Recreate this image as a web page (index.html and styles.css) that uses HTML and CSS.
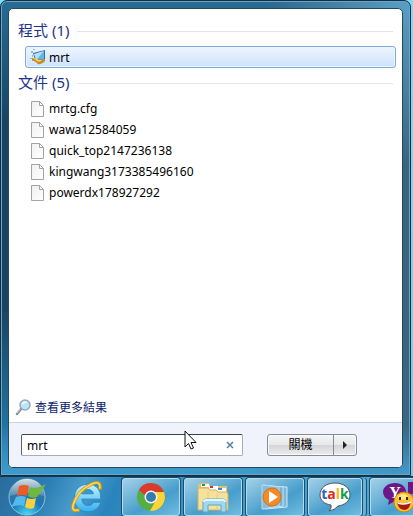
FILE: index.html
```html
<!DOCTYPE html>
<html lang="zh-Hant">
<head>
    <meta charset="UTF-8">
    <meta name="viewport" content="width=device-width, initial-scale=1.0">
    <title>mrt</title>
    <link rel="stylesheet" href="styles.css">
</head>
<body>
    <!-- Shared file icon -->
    <svg class="defs" width="0" height="0" aria-hidden="true">
        <defs>
            <linearGradient id="paper" x1="0" y1="0" x2="1" y2="1">
                <stop offset="0" stop-color="#f0f0f0"/>
                <stop offset="1" stop-color="#ffffff"/>
            </linearGradient>
        </defs>
        <symbol id="file" viewBox="0 0 16 16">
            <path d="M1.500 .5h8l4 4v11h-12z" fill="url(#paper)" stroke="#a3a3a3"/>
            <path d="M9.500 .5v4h4z" fill="#fff" stroke="#a3a3a3"/>
        </symbol>
    </svg>

    <main class="start-menu">
        <div class="panel">
            <section class="results">
                <h2>程式 (1)</h2>
                <ul class="programs">
                    <li><a href="#mrt">
                        <svg class="icon" viewBox="0 0 16 16">
                            <path d="M1 2h2v2H1zM2 6h1v2H2zM0 9h2v1H0zM3 0h2v1H3zM2 11h2v1H2z" fill="#8fb9d8"/>
                            <path d="M3 4l12-3v11l-10-1z" fill="#3b6fa3"/>
                            <path d="M4 5l10-3v9l-8-1z" fill="#63b5ea"/>
                            <path d="M4 5l10-3-7 8h-1z" fill="#b5dff8"/>
                            <path d="M2 9q4 0 6 2l7-1v2q-3 4-7 3-3-3-6-4z" fill="#c98a22"/>
                            <path d="M3 9q4 0 6 2l3 0q-2 3-5 1z" fill="#f7d264"/>
                        </svg>
                        mrt</a></li>
                </ul>
                <h2>文件 (5)</h2>
                <ul class="files">
                    <li><a href="#f1"><svg class="icon"><use href="#file"/></svg>mrtg.cfg</a></li>
                    <li><a href="#f2"><svg class="icon"><use href="#file"/></svg>wawa12584059</a></li>
                    <li><a href="#f3"><svg class="icon"><use href="#file"/></svg>quick_top2147236138</a></li>
                    <li><a href="#f4"><svg class="icon"><use href="#file"/></svg>kingwang3173385496160</a></li>
                    <li><a href="#f5"><svg class="icon"><use href="#file"/></svg>powerdx178927292</a></li>
                </ul>
                <a class="more" href="#more">
                    <svg class="icon" viewBox="0 0 16 16">
                        <path d="M2 15l4-5" stroke="#8a8f96" stroke-width="2.500" stroke-linecap="round"/>
                        <path d="M2 14l3-4" stroke="#d9dde2" stroke-width="1"/>
                        <circle cx="10" cy="6" r="5" fill="#b9e4fa" stroke="#9aa9b8" stroke-width="1.500"/>
                        <path d="M6.500 6a3.500 3.500 0 0 1 6-2.500q-3 0-6 2.500z" fill="#f4fcff"/>
                    </svg>
                    查看更多結果</a>
            </section>

            <form class="search-bar">
                <div class="search-box">
                    <input type="text" value="mrt" aria-label="搜尋">
                    <button type="reset" class="clear" aria-label="清除">
                        <svg width="8" height="8" viewBox="0 0 8 8"><path d="M1 1l6 6M7 1l-6 6" stroke="#4e82ab" stroke-width="1.500"/></svg>
                    </button>
                </div>
                <div class="power">
                    <button type="button" class="shutdown">關機</button>
                    <button type="button" class="power-more" aria-label="更多選項">
                        <svg width="4" height="8" viewBox="0 0 4 8"><path d="M0 0l4 4-4 4z" fill="#222"/></svg>
                    </button>
                </div>
                <svg class="cursor" width="13" height="20" viewBox="0 0 13 20">
                    <path d="M1 1v16l3.500-3.500 2.500 5.500 2.500-1-2.500-5.500h5z" fill="#fff" stroke="#111"/>
                </svg>
            </form>
        </div>
    </main>

    <nav class="taskbar">
        <button class="orb" aria-label="開始">
            <svg width="38" height="38" viewBox="0 0 38 38">
                <defs>
                    <radialGradient id="orb" cx=".5" cy="1" r="1">
                        <stop offset="0" stop-color="#46dcf7"/>
                        <stop offset=".45" stop-color="#1b78b5"/>
                        <stop offset="1" stop-color="#4f7591"/>
                    </radialGradient>
                    <linearGradient id="gloss" x1="0" y1="0" x2="0" y2="1">
                        <stop offset="0" stop-color="#fff" stop-opacity=".75"/>
                        <stop offset="1" stop-color="#fff" stop-opacity=".15"/>
                    </linearGradient>
                </defs>
                <circle cx="19" cy="19" r="18" fill="url(#orb)" stroke="#8fc3df"/>
                <path d="M2 18a17 17 0 0 1 34 0q-17-6-34 0z" fill="url(#gloss)"/>
                <path d="M11 8q5-2 10 0l-2 10q-5-2-10 0z" fill="#ed5b25"/>
                <path d="M22 9q5 3 16-3-3 6-9 13-5 2-9-1z" fill="#6fb83f"/>
                <path d="M8 19q5-2 10 0l-2 9q-5-2-13 1 3-4 5-10z" fill="#54b9ef"/>
                <path d="M19 20q5 2 9 0l-2 10q-5 2-9-1z" fill="#fdcf3d"/>
            </svg>
        </button>
        <button class="pinned" aria-label="Internet Explorer">
            <svg width="34" height="34" viewBox="0 0 32 32">
                <defs>
                    <linearGradient id="ie" x1="0" y1="0" x2="0" y2="1">
                        <stop offset="0" stop-color="#c2f3ff"/>
                        <stop offset="1" stop-color="#35aef0"/>
                    </linearGradient>
                </defs>
                <path d="M30 18H12q1 6 6 6 4 0 5-3h7q-3 9-12 9C9 30 5 24 5 17 5 9 10 4 18 4q12 0 12 14zM12 13h11q-1-4-5-4-5 0-6 4z" fill="url(#ie)" stroke="#2584c5" stroke-width=".8"/>
                <path d="M29 9q2-10-8-5Q8 10 4 23q-2 8 6 5" fill="none" stroke="#dc9b12" stroke-width="3"/>
                <path d="M29 8q1-8-8-4Q8 10 4 23q-2 7 5 5" fill="none" stroke="#ffdc50" stroke-width="1.500"/>
            </svg>
        </button>
        <button class="task" aria-label="Chrome">
            <svg width="30" height="30" viewBox="0 0 30 30">
                <circle cx="15" cy="15" r="14" fill="#56ad46"/>
                <path d="M2.900 8A14 14 0 0 1 28 10H15a6 6 0 0 0-5.500 4z" fill="#dc3a2c"/>
                <path d="M28 10A14 14 0 0 1 14 29l6-11q2-4-1-8z" fill="#fbd43a"/>
                <circle cx="15" cy="15" r="6.500" fill="#f3f5f5"/>
                <circle cx="15" cy="15" r="5" fill="#347bb1"/>
            </svg>
        </button>
        <button class="task" aria-label="檔案總管">
            <svg width="34" height="32" viewBox="0 0 34 32">
                <path d="M2 4l2-2h9l1 3h17v24H2z" fill="#e4c268"/>
                <path d="M5 3h8v3H5zM13 5h9v4h-9zM21 7h9v4h-9z" fill="#fff"/>
                <path d="M6 3h3v2H6z" fill="#16a34a"/>
                <path d="M14 5h3v2h-3z" fill="#d92b2b"/>
                <path d="M22 7h4v2h-4z" fill="#2d8fe0"/>
                <path d="M2 7h10l2 2h6l2 2h9l1 2v16H2z" fill="#f5e19b" stroke="#d4b15c"/>
                <path d="M12 10v18M21 12v17" stroke="#e6cf86"/>
                <path d="M7 31V21q0-3 3-3h17q3 0 3 3v10h-5v-7H12v7z" fill="#a2d8ef" stroke="#5ca7cc"/>
                <path d="M8 21q0-2 2-2h17q2 0 2 2" fill="none" stroke="#e2f6fd" stroke-width="2"/>
            </svg>
        </button>
        <button class="task" aria-label="Media Player">
            <svg width="28" height="26" viewBox="0 0 28 26">
                <path d="M4 2l22 1v20l-22 2z" fill="#7cb8d7" stroke="#d0eaf5"/>
                <path d="M2 1l20 2v19l-20 3z" fill="#72b3d6" stroke="#c2e4f4"/>
                <path d="M1 1l17 2v19l-17 3z" fill="#82bedc" stroke="#b7dced"/>
                <circle cx="11" cy="13" r="9" fill="#f48b27" stroke="#e16d14"/>
                <path d="M8 7l9 6-9 6z" fill="#fff"/>
            </svg>
        </button>
        <button class="task grouped" aria-label="Talk">
            <svg width="32" height="30" viewBox="0 0 32 30">
                <path d="M16 1c9 0 15 5 15 12 0 6-5 10-12 11q-3 4-9 5 3-3 2-6C5 22 1 18 1 13 1 6 7 1 16 1z" fill="#fff" stroke="#555"/>
                <text x="16" y="17" text-anchor="middle" class="talk"><tspan fill="#2863c9">t</tspan><tspan fill="#da291c">a</tspan><tspan fill="#eebc16">l</tspan><tspan fill="#169b45">k</tspan></text>
            </svg>
        </button>
        <button class="task last" aria-label="Yahoo! Messenger">
            <svg width="36" height="34" viewBox="0 0 36 34">
                <path d="M12 3c7 0 11 4 11 9s-4 9-11 9l-7 4 1-5Q0 17 0 12c0-5 5-9 12-9z" fill="#6d1787"/>
                <path d="M25 2h9l-4 12h-5z" fill="#6d1787"/>
                <text x="12" y="18" text-anchor="middle" class="yahoo">Y</text>
                <circle cx="21" cy="22" r="10" fill="#fcc12f" stroke="#cf8510"/>
                <ellipse cx="20" cy="17" rx="5" ry="3" fill="#ffe784"/>
                <path d="M14 22q7 3 14-1-1 9-7 9-6-1-7-8z" fill="#a51c16"/>
                <path d="M14 22q7 3 14-1v2q-6 3-13 1z" fill="#fff"/>
                <path d="M17 17v3M24 17v3" stroke="#40240c" stroke-width="2"/>
            </svg>
        </button>
    </nav>
</body>
</html>
```

FILE: styles.css
```css
/* General Reset */
* {
    margin: 0;
    padding: 0;
    box-sizing: border-box;
}

body {
    display: flex;
    flex-direction: column;
    min-height: 100vh;
    overflow-x: hidden;
    font-family: "Noto Sans", "Noto Sans CJK TC", sans-serif;
    font-size: 12px;
    color: #000;
    background: linear-gradient(#7edcf8, #6ccdf2);
}

a {
    color: inherit;
    text-decoration: none;
}

ul {
    list-style: none;
}

button,
input {
    font: inherit;
    border: none;
    background: none;
}

svg {
    display: block;
    flex: none;
}

.defs {
    position: absolute;
}

/* Start menu frame */
.start-menu {
    flex: 1;
    display: flex;
    margin-right: 2px;
    padding: 7px;
    border: 1px solid #142f40;
    border-radius: 7px 7px 0 0;
    box-shadow: inset 0 0 0 1px #6aa5c4;
    background:
        linear-gradient(to top, #3f9bcd, rgba(63, 155, 205, 0) 50px),
        linear-gradient(to bottom left, #5aa0c8, rgba(90, 160, 200, 0) 110px),
        linear-gradient(to right, rgba(24, 76, 110, 0) 60%, #3d6580),
        linear-gradient(#286b96, #184562 25%, #194562 65%, #2387bd);
}

.panel {
    flex: 1;
    display: flex;
    flex-direction: column;
    min-width: 0;
    border: 1px solid #27485b;
    border-radius: 5px;
    background: #fff;
}

/* Search results */
.results {
    flex: 1;
    display: flex;
    flex-direction: column;
    padding: 12px 6px 5px;
}

.results h2 {
    display: flex;
    align-items: center;
    gap: 8px;
    height: 20px;
    margin: 0 3px 5px;
    padding-bottom: 4px;
    font-size: 15px;
    font-weight: normal;
    color: #1e3287;
}

.results h2::after {
    content: "";
    flex: 1;
    height: 1px;
    margin-top: 4px;
    background: #e2e2e2;
}

.programs,
.files {
    margin-left: 10px;
}

.programs {
    margin-bottom: 5px;
}

.programs a,
.files a {
    display: flex;
    align-items: center;
    gap: 3px;
    height: 21px;
    padding-left: 5px;
}

.programs a {
    height: 22px;
    padding-left: 4px;
    border: 1px solid #7da9da;
    border-radius: 3px;
    box-shadow: inset 0 0 0 1px #edf5ff;
    background: linear-gradient(#edf4fe, #cde3fe);
}

.icon {
    width: 16px;
    height: 16px;
}

.more {
    display: flex;
    align-items: center;
    gap: 4px;
    height: 20px;
    margin-top: auto;
    color: #0b1c6c;
}

/* Search bar */
.search-bar {
    position: relative;
    display: flex;
    align-items: center;
    gap: 24px;
    height: 45px;
    padding: 0 45px 0 12px;
    border-top: 1px solid #c5d5e8;
    border-radius: 0 0 4px 4px;
    background: #f0f3fb;
}

.search-box {
    flex: 1;
    display: flex;
    align-items: center;
    min-width: 0;
    height: 22px;
    border: 1px solid #a5adb8;
    border-top-color: #3d4248;
    border-left-color: #5b6269;
    border-radius: 2px;
    background: #fff;
}

.search-box input {
    flex: 1;
    min-width: 0;
    height: 20px;
    padding-left: 5px;
    outline: none;
}

.clear {
    padding: 4px 8px;
}

.power {
    display: flex;
    width: 90px;
    height: 22px;
    border: 1px solid #858b92;
    border-radius: 3px;
    box-shadow: inset 0 0 0 1px #fafafa;
    background: linear-gradient(#f5f5f6, #e7e8ea 48%, #d2d4d8 50%, #ececee);
}

.shutdown {
    flex: 1;
    line-height: 18px;
    border-right: 1px solid #858b92;
}

.power-more {
    display: flex;
    align-items: center;
    justify-content: center;
    width: 22px;
}

.cursor {
    position: absolute;
    top: 7px;
    left: 175px;
}

/* Taskbar */
.taskbar {
    display: flex;
    align-items: center;
    gap: 4px;
    height: 40px;
    padding-left: 8px;
    overflow: hidden;
    border-top: 1px solid #12384e;
    background: linear-gradient(115deg, #2a6c9c, #2b7fb5 12%, #4a9ccb 20%, #2a84bc 28%, #3c9aca 50%, #52acd6);
}

.orb {
    flex: none;
}

.pinned {
    flex: none;
    display: flex;
    justify-content: center;
    width: 68px;
    padding-left: 4px;
}

.task {
    flex: none;
    display: flex;
    align-items: center;
    justify-content: center;
    width: 58px;
    height: 38px;
    border: 1px solid #b4dcee;
    border-radius: 3px;
    box-shadow: 0 0 0 1px #1b4d70;
    background: linear-gradient(150deg, #a3d0e8, #5fabd3 45%, #479dcb 60%, #70bde0);
}

.grouped {
    width: 54px;
    margin-right: 4px;
    box-shadow: 0 0 0 1px #1b4d70, 4px 0 0 0 #67b2d6, 5px 0 0 0 #1b4d70;
}

.last {
    width: 62px;
}

.talk {
    font: bold 14px "Open Sans", sans-serif;
}

.yahoo {
    font: bold 16px "Liberation Serif", serif;
    fill: #fff;
}
```
